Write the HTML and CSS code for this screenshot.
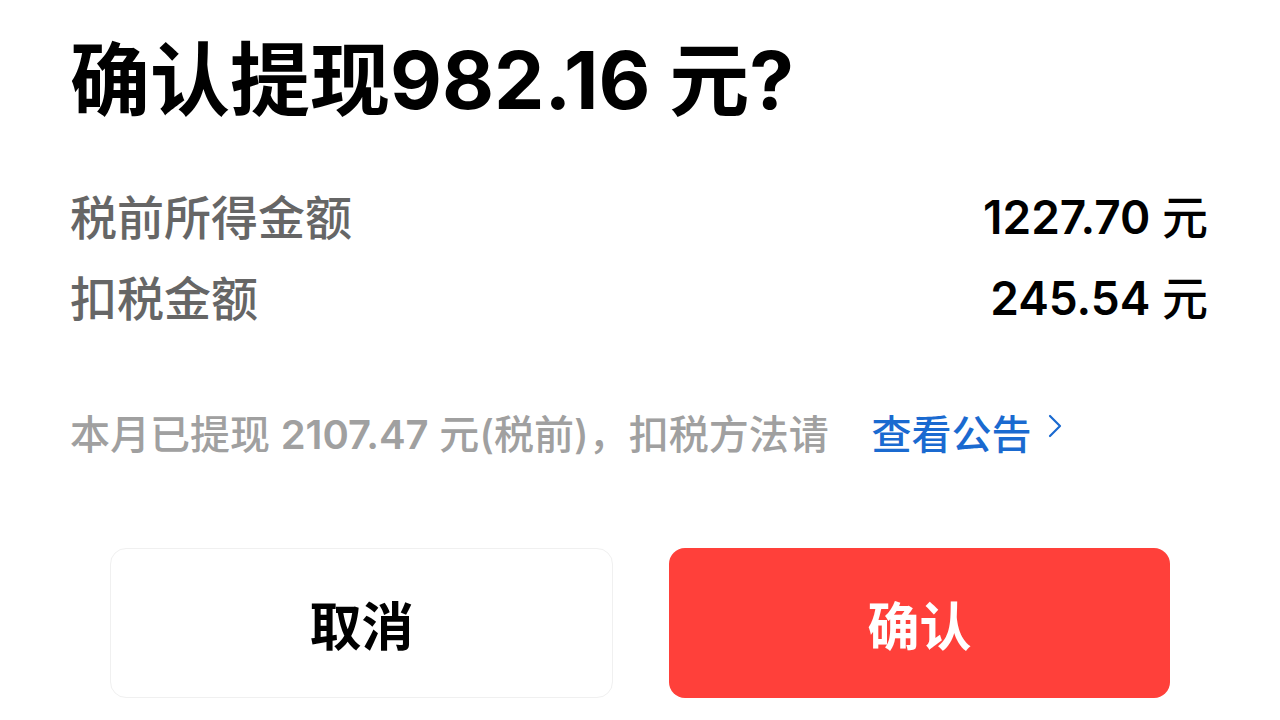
FILE: index.html
```
<!DOCTYPE html>
<html lang="zh-CN">
<head>
<meta charset="utf-8">
<link rel="stylesheet" href="styles.css">
</head>
<body>
<div class="dialog">
  <h1 class="title">确认提现982.16 元?</h1>
  <div class="rows">
    <div class="row"><span class="label">税前所得金额</span><span class="value">1227.70 <span class="unit">元</span></span></div>
    <div class="row"><span class="label">扣税金额</span><span class="value">245.54 <span class="unit">元</span></span></div>
  </div>
  <p class="notice">本月已提现 <span class="num">2107.47</span> 元(税前)，扣税方法请 <a class="link">查看公告<svg class="chev" width="16" height="24" viewBox="0 0 16 24"><path d="M3 2 L13 12 L3 22" fill="none" stroke="#1a6ad0" stroke-width="2.2" stroke-linecap="round" stroke-linejoin="round"/></svg></a></p>
  <div class="actions">
    <button class="btn cancel">取消</button>
    <button class="btn confirm">确认</button>
  </div>
</div>
</body>
</html>
```
FILE: styles.css
```
html, body { margin: 0; padding: 0; background: #fff; }
body { font-family: "Inter", "Noto Sans CJK SC", sans-serif; width: 1280px; height: 720px; overflow: hidden; }
.dialog { padding: 25px 72px 0 70px; }
.title { margin: 0; font-size: 80px; line-height: 110px; font-weight: 700; color: #000; letter-spacing: 0; }
.rows { margin-top: 55px; display: flex; flex-direction: column; gap: 33px; }
.row { display: flex; justify-content: space-between; align-items: center; height: 48px; }
.label { font-size: 47px; color: #666; font-weight: 500; }
.value { font-size: 46px; color: #000; font-weight: 600; }
.unit { font-weight: 500; }
.notice { margin: 91px 0 0; font-size: 40px; line-height: 50px; color: #a0a0a0; font-weight: 500; display: flex; align-items: center; white-space: pre; }
.num { font-weight: 600; }
.link { color: #1a6ad0; display: inline-flex; align-items: center; margin-left: 32px; }
.chev { margin-left: 16px; margin-top: -18px; }
.actions { display: flex; gap: 56px; margin: 88px 38px 0 40px; }
.btn { flex: 1; height: 150px; border-radius: 16px; font-family: "Noto Sans CJK SC", sans-serif; font-size: 52px; font-weight: 700; border: none; }
.cancel { background: #fff; border: 1.5px solid #f0f0f0; color: #000; }
.confirm { background: #ff403a; color: #fff; }
```
